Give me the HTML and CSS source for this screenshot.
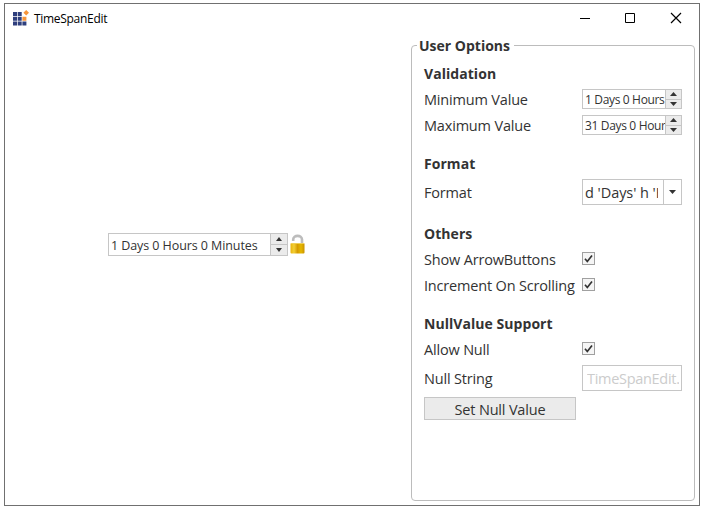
FILE: index.html
```
<!DOCTYPE html>
<html lang="en">
<head>
<meta charset="utf-8">
<title>TimeSpanEdit</title>
<link rel="stylesheet" href="styles.css">
</head>
<body>
<div class="window">
  <header class="titlebar">
    <svg class="app-icon" width="17" height="17" viewBox="0 0 17 17">
      <g fill="#2f3f7d"><path d="M0 2h4v4H0zM4.700 2h4v4h-4zM0 6.700h4v4H0zM4.700 6.700h4v4h-4zM0 11.400h4v4H0zM4.700 11.400h4v4h-4zM9.400 11.400h4v4h-4z"/></g>
      <path fill="#f7953a" d="M9.400 6.700h4v4h-4zM13.200 0l2.800 2.800-2.800 2.800-2.800-2.800z"/>
    </svg>
    <span class="title">TimeSpanEdit</span>
    <svg class="controls" width="104" height="12" viewBox="0 0 104 12" fill="none" stroke="#000">
      <path d="M0 6.500h10M45.500 1.500h9v9h-9z"/>
      <path d="M91 1l10 10M101 1l-10 10" stroke-width="1.200"/>
    </svg>
  </header>
  <main class="body">
    <section class="demo">
      <div class="spin spin-main">
        <span class="value">1 Days 0 Hours 0 Minutes</span>
        <span class="arrows">
          <span class="arrow"><svg width="6" height="4"><path d="M0 4L3 0l3 4z"/></svg></span>
          <span class="arrow"><svg width="6" height="4"><path d="M0 0h6L3 4z"/></svg></span>
        </span>
      </div>
      <svg class="lock" width="15" height="21" viewBox="0 0 15 21">
        <defs><linearGradient id="gold"><stop offset="0" stop-color="#e9b30c"/><stop offset=".25" stop-color="#f3cf35"/><stop offset=".5" stop-color="#d59b00"/><stop offset=".75" stop-color="#e6b800"/><stop offset="1" stop-color="#c99200"/></linearGradient></defs>
        <path d="M3.200 7V5.500C3.200.7 12 .7 12 5.500V11" fill="none" stroke="#bcbcbc" stroke-width="2.600"/>
        <rect x=".5" y="9" width="14" height="10.500" rx="1" fill="url(#gold)"/>
        <path d="M1 9.500h13" stroke="#f0cf58"/>
      </svg>
    </section>
    <section class="options">
      <h1 class="legend"><span>User Options</span></h1>
      <h2 class="heading">Validation</h2>
      <div class="row">
        <span class="label">Minimum Value</span>
        <div class="spin"><span class="value">1 Days 0 Hours</span>
          <span class="arrows">
            <span class="arrow"><svg width="7" height="4"><path d="M0 4L3.500 0 7 4z"/></svg></span>
            <span class="arrow"><svg width="7" height="4"><path d="M0 0h7L3.500 4z"/></svg></span>
          </span>
        </div>
      </div>
      <div class="row">
        <span class="label">Maximum Value</span>
        <div class="spin"><span class="value">31 Days 0 Hour</span>
          <span class="arrows">
            <span class="arrow"><svg width="7" height="4"><path d="M0 4L3.500 0 7 4z"/></svg></span>
            <span class="arrow"><svg width="7" height="4"><path d="M0 0h7L3.500 4z"/></svg></span>
          </span>
        </div>
      </div>
      <h2 class="heading gap">Format</h2>
      <div class="row row-format">
        <span class="label">Format</span>
        <div class="combo"><span class="combo-value"><span class="clip">d 'Days' h 'H</span></span><span class="drop"><svg width="7" height="4"><path d="M0 0h7L3.500 4z"/></svg></span></div>
      </div>
      <h2 class="heading gap heading-others">Others</h2>
      <div class="row row-show">
        <span class="label">Show ArrowButtons</span>
        <span class="check"><svg width="11" height="11" viewBox="0 0 11 11"><path d="M2 5.800l2.300 2.700L9 2.500"/></svg></span>
      </div>
      <div class="row row-tight">
        <span class="label">Increment On Scrolling</span>
        <span class="check"><svg width="11" height="11" viewBox="0 0 11 11"><path d="M2 5.800l2.300 2.700L9 2.500"/></svg></span>
      </div>
      <h2 class="heading gap heading-null">NullValue Support</h2>
      <div class="row row-tight">
        <span class="label">Allow Null</span>
        <span class="check"><svg width="11" height="11" viewBox="0 0 11 11"><path d="M2 5.800l2.300 2.700L9 2.500"/></svg></span>
      </div>
      <div class="row row-null">
        <span class="label">Null String</span>
        <div class="nullbox"><span class="clip">TimeSpanEdit.</span></div>
      </div>
      <div class="button">Set Null Value</div>
    </section>
  </main>
</div>
</body>
</html>
```
FILE: styles.css
```
* { box-sizing: border-box; }
body {
  margin: 0;
  padding: 3px 4px;
  background: #fff;
  color: #333;
  font-family: "Open Sans", "Noto Sans", sans-serif;
  font-size: 14.500px;
  letter-spacing: -0.18px;
}
svg { display: block; flex: none; }
.window {
  width: 696px;
  height: 503px;
  border: 1px solid #707070;
  display: flex;
  flex-direction: column;
}
.titlebar {
  height: 30px;
  flex: none;
  display: flex;
  align-items: center;
  padding: 0 15px 0 8px;
  color: #000;
}
.app-icon { margin-top: -1px; }
.title {
  margin: -2px 0 0 4px;
  font-size: 12px;
  letter-spacing: -0.3px;
  flex: 1;
}
.controls { margin-top: -2px; }
.body { display: flex; flex: 1; }
.demo {
  width: 406px;
  padding: 199px 0 0 103px;
  display: flex;
  align-items: flex-start;
}
.lock { margin: 1px 0 0 2px; }
.spin {
  width: 100px;
  height: 20px;
  border: 1px solid #c6c6c6;
  display: flex;
  font-size: 12px;
  background: #fff;
}
.spin-main { width: 180px; height: 23px; }
.value {
  flex: 1;
  min-width: 0;
  overflow: hidden;
  white-space: nowrap;
  padding-left: 2px;
  line-height: 19px;
  letter-spacing: -0.34px;
}
.spin-main .value { line-height: 23px; font-size: 12.500px; letter-spacing: -0.08px; }
.arrows {
  width: 16px;
  border-left: 1px solid #c6c6c6;
  display: flex;
  flex-direction: column;
}
.spin-main .arrows { width: 17px; }
.arrow {
  flex: 1;
  display: flex;
  align-items: center;
  justify-content: center;
  background: #ebebeb;
  fill: #333;
}
.arrow + .arrow { border-top: 1px solid #c6c6c6; }
.options {
  width: 284px;
  height: 456px;
  margin-top: 11px;
  border: 1px solid #bcbcbc;
  border-radius: 4px;
  padding-left: 12px;
}
.legend {
  height: 20px;
  margin: -10px 0 5px -7px;
  font-size: 14px;
  line-height: 20px;
  font-weight: 700;
  letter-spacing: 0;
}
.legend span { background: #fff; padding: 0 4px 0 2px; }
.heading {
  height: 25px;
  margin: 0;
  font-size: 14px;
  line-height: 25px;
  font-weight: 700;
  letter-spacing: 0.05px;
}
.gap { margin-top: 13px; }
.heading-others { height: 24px; }
.heading-null { margin-top: 14px; }
.row { height: 26px; display: flex; align-items: center; }
.label { width: 158px; white-space: nowrap; }
.row-format { height: 32px; }
.row-show { height: 27px; }
.row-tight { height: 25px; }
.row-show .label, .row-tight .label { padding-top: 2px; }
.row-null { height: 34px; }
.combo, .nullbox {
  width: 100px;
  height: 26px;
  border: 1px solid #c6c6c6;
  display: flex;
}
.combo-value { flex: 1; min-width: 0; padding: 0 5px 0 2px; line-height: 25px; letter-spacing: -0.05px; }
.clip { display: block; overflow: hidden; white-space: nowrap; }
.drop {
  width: 18px;
  border-left: 1px solid #c6c6c6;
  display: flex;
  align-items: center;
  justify-content: center;
  fill: #333;
}
.check {
  width: 13px;
  height: 13px;
  border: 1px solid #a0a0a0;
  background: #f5f5f5;
}
.check path { fill: none; stroke: #333; stroke-width: 1.700; }
.nullbox { padding: 0 2px 0 4px; line-height: 25px; color: #ccc; letter-spacing: -0.3px; }
.button {
  width: 152px;
  height: 23px;
  margin-top: 2px;
  border: 1px solid #c6c6c6;
  background: #ebebeb;
  text-align: center;
  line-height: 23px;
}
```
